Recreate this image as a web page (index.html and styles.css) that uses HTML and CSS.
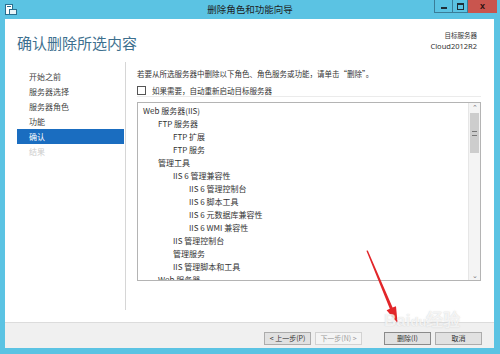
FILE: index.html
```html
<!DOCTYPE html>
<html lang="zh-CN">
<head>
    <meta charset="UTF-8">
    <title>删除角色和功能向导</title>
    <link rel="stylesheet" href="styles.css">
</head>
<body>
    <div class="window">
        <div class="titlebar">
            <svg class="app-icon" width="12" height="11" viewBox="0 0 12 11">
                <rect x="0.5" y="0.5" width="7" height="10" fill="#fff" stroke="#2a6f8f"/>
                <rect x="2" y="2" width="4" height="1" fill="#2a6f8f"/>
                <rect x="4.5" y="5.5" width="7" height="5" fill="#e8f4f8" stroke="#2a6f8f"/>
            </svg>
            <div class="title">删除角色和功能向导</div>
            <div class="controls">
                <div class="ctl ctl-min"><span class="bar"></span></div>
                <div class="ctl ctl-max"><span class="box"></span></div>
                <div class="ctl ctl-close">x</div>
            </div>
        </div>

        <div class="client">
            <div class="header">
                <h1>确认删除所选内容</h1>
                <div class="target">
                    <div class="target-label">目标服务器</div>
                    <div class="target-name">Cloud2012R2</div>
                </div>
            </div>

            <div class="body">
                <ul class="nav">
                    <li>开始之前</li>
                    <li>服务器选择</li>
                    <li>服务器角色</li>
                    <li>功能</li>
                    <li class="active">确认</li>
                    <li class="disabled">结果</li>
                </ul>

                <div class="main">
                    <p class="intro">若要从所选服务器中删除以下角色、角色服务或功能，请单击“删除”。</p>
                    <div class="check-row">
                        <span class="checkbox"></span>
                        <span>如果需要，自动重新启动目标服务器</span>
                    </div>
                    <div class="listbox">
                        <div class="items">
                            <div class="item l0">Web 服务器(IIS)</div>
                            <div class="item l1">FTP 服务器</div>
                            <div class="item l2">FTP 扩展</div>
                            <div class="item l2">FTP 服务</div>
                            <div class="item l1">管理工具</div>
                            <div class="item l2">IIS 6 管理兼容性</div>
                            <div class="item l3">IIS 6 管理控制台</div>
                            <div class="item l3">IIS 6 脚本工具</div>
                            <div class="item l3">IIS 6 元数据库兼容性</div>
                            <div class="item l3">IIS 6 WMI 兼容性</div>
                            <div class="item l2">IIS 管理控制台</div>
                            <div class="item l2">管理服务</div>
                            <div class="item l2">IIS 管理脚本和工具</div>
                            <div class="item l1">Web 服务器</div>
                        </div>
                        <div class="scrollbar">
                            <div class="arrow">&#8963;</div>
                            <div class="track">
                                <div class="thumb"><span class="grip"></span></div>
                            </div>
                            <div class="arrow">&#8964;</div>
                        </div>
                    </div>
                </div>
            </div>

            <div class="footer">
                <button class="btn">&lt; 上一步(P)</button>
                <button class="btn btn-disabled">下一步(N) &gt;</button>
                <button class="btn btn-default">删除(I)</button>
                <button class="btn">取消</button>
            </div>
        </div>

        <svg class="pointer" width="500" height="354" viewBox="0 0 500 354">
            <polygon points="366.4,250.8 367.8,250.4 392.6,307.6 396,306.2 397.6,323 386.6,310.2 389.8,308.8" fill="#e2262a"/>
        </svg>
        <div class="watermark">Bai<span class="du">du</span>经验</div>
    </div>
</body>
</html>
```

FILE: styles.css
```css
body {
    margin: 0;
    padding: 0;
    background-color: #5bc3e3;
    font-family: "Noto Sans", "Noto Sans CJK SC", sans-serif;
    color: #333;
}
.window {
    position: relative;
    width: 500px;
    height: 354px;
    display: flex;
    flex-direction: column;
    overflow: hidden;
}
.titlebar {
    height: 19px;
    display: flex;
    align-items: flex-start;
    position: relative;
}
.app-icon {
    margin: 4px 0 0 5px;
}
.title {
    position: absolute;
    left: 0;
    right: 0;
    top: 3px;
    text-align: center;
    font-family: "Noto Sans CJK SC", sans-serif;
    font-size: 9.5px;
    line-height: 12px;
    color: #1e1e1e;
}
.controls {
    margin-left: auto;
    margin-right: 3px;
    display: flex;
}
.ctl {
    height: 13px;
    display: flex;
    align-items: center;
    justify-content: center;
    box-sizing: border-box;
}
.ctl-min, .ctl-max {
    border: 1px solid #3a7d98;
    border-top: none;
}
.ctl-min {
    width: 18px;
    border-right: none;
}
.ctl-max {
    width: 16px;
}
.ctl-min .bar {
    width: 6px;
    height: 2px;
    margin-top: 4px;
    background: #1f2f38;
}
.ctl-max .box {
    width: 5px;
    height: 4px;
    border: 1px solid #1f2f38;
    border-top-width: 2px;
}
.ctl-close {
    width: 29px;
    background-color: #c9554e;
    color: #2a1210;
    font-family: "Liberation Sans", sans-serif;
    font-weight: bold;
    font-size: 9px;
    line-height: 13px;
}
.client {
    flex: 1;
    margin: 0 6px 6px 5px;
    background-color: #fff;
    display: flex;
    flex-direction: column;
}
.header {
    height: 43px;
    display: flex;
    justify-content: space-between;
    align-items: flex-start;
    padding: 0 17px 0 12px;
}
.header h1 {
    margin: 15px 0 0 0;
    font-family: "Noto Sans CJK SC", sans-serif;
    font-weight: normal;
    font-size: 15px;
    line-height: 18px;
    color: #3d6f8e;
}
.target {
    margin-top: 12px;
    text-align: right;
    font-size: 6.5px;
    line-height: 10px;
    color: #333;
}
.target-name {
    font-size: 7.5px;
}
.body {
    flex: 1;
    display: flex;
    padding-bottom: 12px;
}
.nav {
    list-style: none;
    margin: 0;
    padding: 7px 1px 0 12px;
    width: 107px;
    border-right: 1px solid #d6d6d6;
    font-family: "Noto Sans CJK SC", sans-serif;
    font-size: 8px;
    color: #444;
}
.nav li {
    height: 15px;
    line-height: 15px;
    padding-left: 12px;
}
.nav li.active {
    background-color: #1a6dc0;
    color: #fff;
}
.nav li.disabled {
    color: #cdcdcd;
}
.main {
    flex: 1;
    padding: 6px 13px 0 11px;
    font-family: "Noto Sans CJK SC", sans-serif;
    font-size: 7.5px;
    display: flex;
    flex-direction: column;
}
.intro {
    margin: 0;
    line-height: 12px;
    color: #333;
}
.check-row {
    margin-top: 5px;
    height: 10px;
    display: flex;
    align-items: center;
    gap: 6px;
    padding-bottom: 1px;
    border-bottom: 1px solid #ebebeb;
    color: #333;
}
.checkbox {
    width: 7px;
    height: 7px;
    border: 1px solid #555;
    background: #fff;
}
.listbox {
    margin-top: 5px;
    height: 179px;
    box-sizing: border-box;
    border: 1px solid #b4b4b4;
    display: flex;
    overflow: hidden;
}
.items {
    flex: 1;
    padding-top: 1px;
}
.item {
    height: 13px;
    line-height: 13px;
    font-size: 8px;
    color: #333;
    white-space: nowrap;
}
.l0 { padding-left: 5px; }
.l1 { padding-left: 20px; }
.l2 { padding-left: 35px; }
.l3 { padding-left: 51px; }
.scrollbar {
    width: 11px;
    border-left: 1px solid #e6e6e6;
    background-color: #f4f4f4;
    display: flex;
    flex-direction: column;
}
.arrow {
    height: 9px;
    line-height: 9px;
    text-align: center;
    font-size: 7px;
    color: #777;
}
.track {
    flex: 1;
    padding: 1px 1px;
}
.thumb {
    height: 40px;
    background-color: #cdcdcd;
    display: flex;
    align-items: center;
    justify-content: center;
}
.grip {
    width: 5px;
    height: 3px;
    border-top: 1px solid #777;
    border-bottom: 1px solid #777;
    position: relative;
}
.footer {
    height: 26px;
    box-sizing: border-box;
    border-top: 1px solid #dcdcdc;
    background-color: #f0f0f0;
    display: flex;
    justify-content: flex-end;
    align-items: flex-start;
    padding: 9px 12px 0 0;
}
.btn {
    width: 47px;
    height: 13px;
    padding: 0;
    margin-left: 4px;
    border: 1px solid #acacac;
    background-color: #e1e1e1;
    font-family: "Noto Sans CJK SC", sans-serif;
    font-size: 7px;
    line-height: 11px;
    color: #333;
}
.btn-disabled {
    background-color: #f4f4f4;
    border-color: #d2d2d2;
    color: #9a9a9a;
}
.btn-default {
    margin-left: 22px;
    border-color: #8a8a8a;
}
.pointer {
    position: absolute;
    left: 0;
    top: 0;
    pointer-events: none;
}
.watermark {
    position: absolute;
    left: 384px;
    top: 306px;
    font-family: "Liberation Sans", sans-serif;
    font-weight: bold;
    font-size: 17px;
    color: rgba(255, 255, 255, 0.75);
    text-shadow: 0 0 1px rgba(160, 160, 160, 0.5);
    pointer-events: none;
}
.watermark .du {
    font-size: 13px;
}
```
